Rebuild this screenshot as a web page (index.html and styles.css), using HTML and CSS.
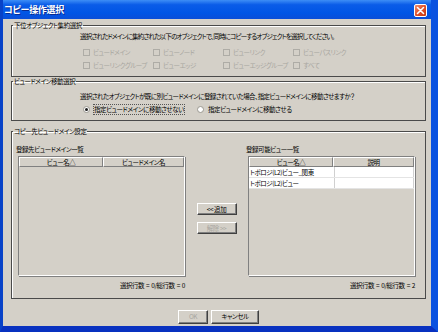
FILE: index.html
```html
<!DOCTYPE html>
<html>
<head>
  <meta charset="UTF-8">
  <title>コピー操作選択</title>
  <link rel="stylesheet" href="styles.css">
</head>
<body>

  <div class="window">
    <div class="titlebar">
      <span class="title">コピー操作選択</span>
      <span class="close">
        <svg width="9" height="9" viewBox="0 0 9 9"><path d="M1.5 1.5 L7.5 7.5 M7.5 1.5 L1.5 7.5" stroke="#fff" stroke-width="1.6" stroke-linecap="round"/></svg>
      </span>
    </div>

    <div class="client">

      <!-- sub objects -->
      <fieldset class="group g1">
        <legend>下位オブジェクト集約選択</legend>
        <p class="msg">選択されたドメインに集約された以下のオブジェクトで、同時にコピーするオブジェクトを選択してください。</p>
        <div class="checks">
          <label class="check"><span class="box"></span>ビュードメイン</label>
          <label class="check"><span class="box"></span>ビューノード</label>
          <label class="check"><span class="box"></span>ビューリンク</label>
          <label class="check"><span class="box"></span>ビューパスリンク</label>
          <label class="check"><span class="box"></span>ビューリンクグループ</label>
          <label class="check"><span class="box"></span>ビューエッジ</label>
          <label class="check"><span class="box"></span>ビューエッジグループ</label>
          <label class="check"><span class="box"></span>すべて</label>
        </div>
      </fieldset>

      <!-- move -->
      <fieldset class="group g2">
        <legend>ビュードメイン移動選択</legend>
        <p class="msg">選択されたオブジェクトが既に別ビュードメインに登録されていた場合、指定ビュードメインに移動させますか？</p>
        <div class="radios">
          <label class="radio on"><span class="dot"></span><span class="focus">指定ビュードメインに移動させない</span></label>
          <label class="radio"><span class="dot"></span>指定ビュードメインに移動させる</label>
        </div>
      </fieldset>

      <!-- target -->
      <fieldset class="group g3">
        <legend>コピー先ビュードメイン設定</legend>
        <div class="panels">
          <div class="panel left">
            <div class="caption">登録先ビュードメイン一覧</div>
            <div class="table">
              <div class="head">
                <div class="th c1">ビュー名△</div>
                <div class="th c2">ビュードメイン名</div>
              </div>
            </div>
            <div class="status">選択行数 = 0/総行数 = 0</div>
          </div>

          <div class="middle">
            <button class="btn">&lt;&lt; 追加</button>
            <button class="btn" disabled>解除 &gt;&gt;</button>
          </div>

          <div class="panel right">
            <div class="caption">登録可能ビュー一覧</div>
            <div class="table">
              <div class="head">
                <div class="th r1">ビュー名△</div>
                <div class="th r2">説明</div>
              </div>
              <div class="row"><div class="td r1">トポロジ(L2)ビュー_関東</div><div class="td r2"></div></div>
              <div class="row"><div class="td r1">トポロジ(L2)ビュー</div><div class="td r2"></div></div>
            </div>
            <div class="status">選択行数 = 0/総行数 = 2</div>
          </div>
        </div>
      </fieldset>

      <div class="actions">
        <button class="btn ok" disabled>OK</button>
        <button class="btn cancel">キャンセル</button>
      </div>
    </div>
  </div>

</body>
</html>
```

FILE: styles.css
```css
body {
  margin: 0;
  font-family: "Noto Sans CJK JP", sans-serif;
  font-size: 6.5px;
  line-height: 9px;
  letter-spacing: -0.45px;
  font-feature-settings: "palt";
  color: #000;
  background: #d4d0c8;
  white-space: nowrap;
}

.window {
  width: 438px;
  height: 332px;
  box-sizing: border-box;
  display: flex;
  flex-direction: column;
  background: #0a54e4;
  border-left: 3px solid #0842c8;
  border-right: 7px solid #0a52e0;
  border-bottom: 6px solid #0831c0;
}

.titlebar {
  height: 19px;
  display: flex;
  align-items: center;
  justify-content: space-between;
  padding: 0 4px 0 1px;
  background: linear-gradient(#3d8ef6, #0a5ce8 25%, #0055e5 70%, #0a4ed8);
}

.title {
  color: #fff;
  font-weight: bold;
  font-size: 9px;
  letter-spacing: -0.3px;
  text-shadow: 1px 1px 0 #0a2a90;
}

.close {
  width: 13px;
  height: 13px;
  box-sizing: border-box;
  border: 1px solid #fff;
  border-radius: 2px;
  background: linear-gradient(135deg, #f09070, #e0502a 50%, #c8380e);
  display: flex;
  align-items: center;
  justify-content: center;
  margin-top: 2px;
}

.client {
  flex: 1;
  background: #d4d0c8;
  padding: 2px 5px 0 8px;
  display: flex;
  flex-direction: column;
}

.group {
  margin: 0;
  padding: 0;
  border: 1px solid #4a4a4a;
  box-shadow: inset 1px 1px 0 #fff;
  min-width: 0;
}

.group legend {
  padding: 0 1px;
  margin-left: 1px;
}

.msg {
  margin: 2px 0 0 68px;
}

.g1 .msg {
  letter-spacing: -0.8px;
}

.checks {
  display: grid;
  grid-template-columns: repeat(4, 70px);
  row-gap: 3.5px;
  margin: 7px 0 6px 71px;
}

.check {
  display: flex;
  align-items: center;
  gap: 3px;
  color: #a8a6a0;
}

.box {
  width: 7px;
  height: 7px;
  box-sizing: border-box;
  border: 1px solid #aeaca6;
  background: #d4d0c8;
}

.g2 .msg {
  margin-top: 6px;
  letter-spacing: -0.6px;
}

.radios {
  display: flex;
  margin: 4px 0 6.5px 71px;
}

.radio {
  display: flex;
  align-items: center;
  gap: 4px;
  width: 114px;
}

.dot {
  width: 7px;
  height: 7px;
  box-sizing: border-box;
  border: 1px solid #9a9890;
  border-radius: 50%;
  background: #fff;
  display: flex;
  align-items: center;
  justify-content: center;
}

.radio.on .dot::after {
  content: "";
  width: 3px;
  height: 3px;
  border-radius: 50%;
  background: #1a1a1a;
}

.focus {
  outline: 1px dotted #555;
  outline-offset: 0;
}

.g3 {
  margin-top: 6px;
  height: 172px;
  box-sizing: border-box;
}

.panels {
  display: flex;
  padding: 9px 0 0 6px;
}

.panel {
  display: flex;
  flex-direction: column;
}

.panel.left {
  width: 167px;
}

.panel.right {
  width: 167px;
}

.caption {
  margin-left: -2px;
  height: 9px;
}

.table {
  margin-top: 2px;
  height: 120px;
  box-sizing: border-box;
  border: 1px solid #808080;
  border-right-color: #fff;
  border-bottom-color: #fff;
  box-shadow: 1px 1px 0 #808080;
  display: flex;
  flex-direction: column;
}

.head, .row {
  display: flex;
}

.th {
  height: 10px;
  box-sizing: border-box;
  border-top: 1px solid #fff;
  border-left: 1px solid #fff;
  border-right: 1px solid #808080;
  border-bottom: 1px solid #808080;
  text-align: center;
  line-height: 8px;
}

.c1 { width: 84px; }
.c2 { flex: 1; }
.r1 { width: 84px; }
.r2 { flex: 1; }

.row {
  background: #fff;
  height: 10px;
  border-bottom: 1px solid #e4e4e4;
}

.td {
  padding-left: 1px;
  line-height: 10px;
  border-right: 1px solid #d0d0d0;
}

.status {
  margin-top: 4.5px;
  text-align: right;
  word-spacing: 1px;
}

.middle {
  width: 63px;
  display: flex;
  flex-direction: column;
  align-items: center;
  padding-top: 58px;
  gap: 7px;
}

.btn {
  font-family: inherit;
  font-size: 6.5px;
  letter-spacing: -0.45px;
  font-feature-settings: "palt";
  line-height: 9px;
  width: 40px;
  height: 12px;
  padding: 0;
  background: #d4d0c8;
  color: #000;
  border: 1px solid;
  border-color: #fff #404040 #404040 #fff;
  box-shadow: inset -1px -1px 0 #808080;
}

.btn:disabled {
  color: #a8a6a0;
}

.actions {
  display: flex;
  justify-content: center;
  gap: 3px;
  margin-top: 10.5px;
}

.ok {
  width: 30px;
  height: 14px;
}

.cancel {
  width: 48px;
  height: 14px;
}
```
